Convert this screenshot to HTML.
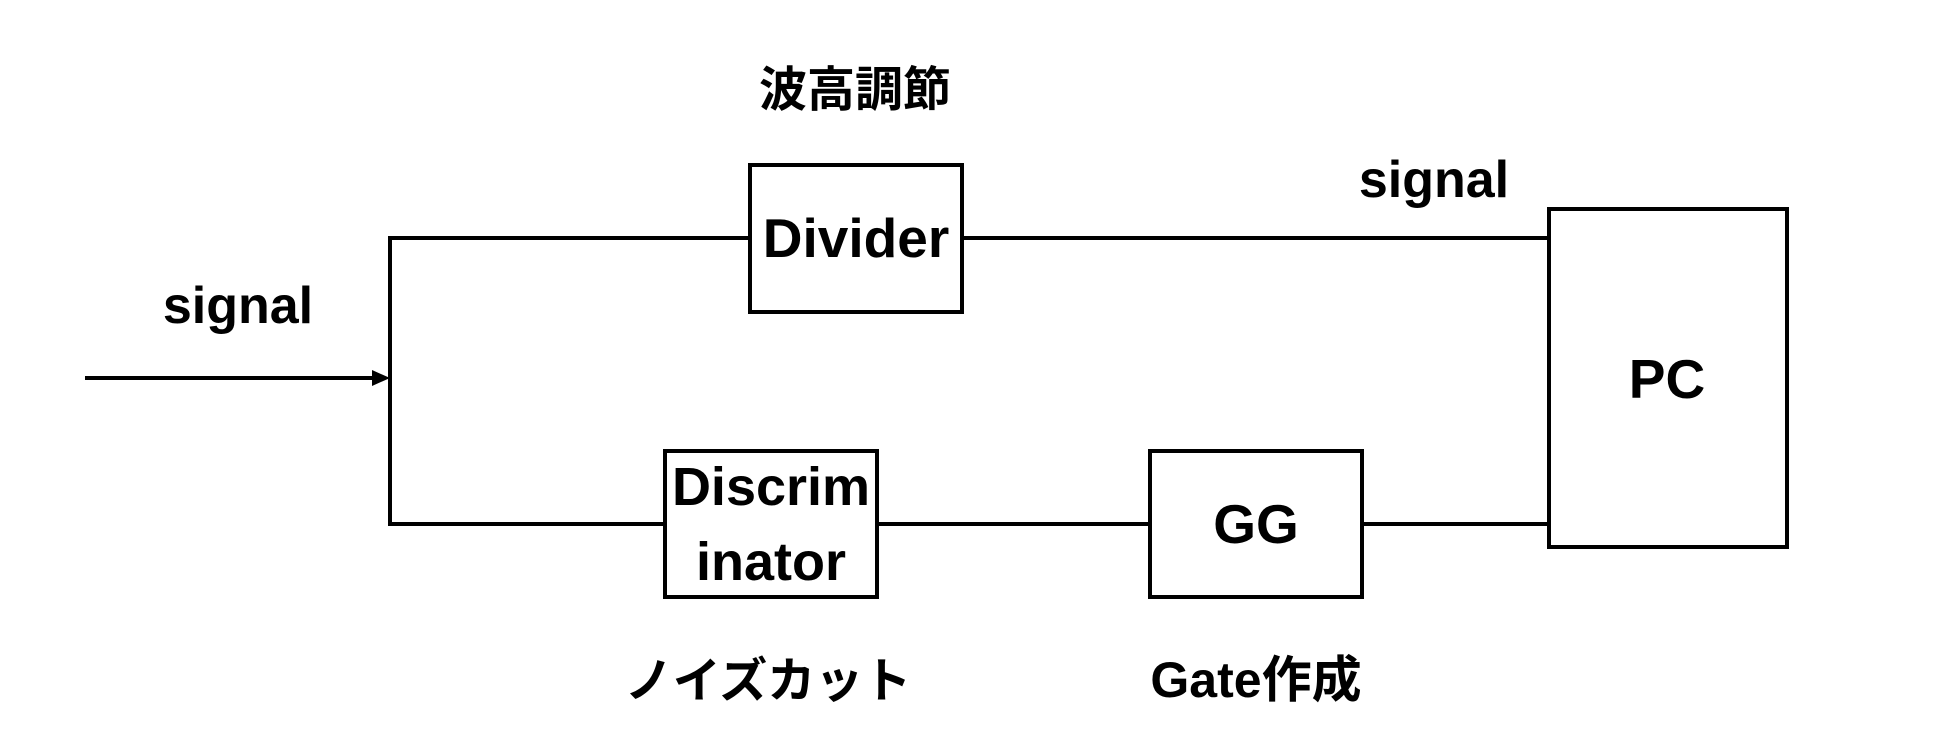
<!DOCTYPE html>
<html><head><meta charset="utf-8"><style>
html,body{margin:0;padding:0;background:#fff;}
svg{display:block;}
text{font-family:"Liberation Sans","Noto Sans CJK JP",sans-serif;font-weight:bold;fill:#000;}
</style></head><body>
<svg width="1935" height="731" viewBox="0 0 1935 731" xmlns="http://www.w3.org/2000/svg">
<g stroke="#000" stroke-width="4" fill="none">
<line x1="85" y1="378" x2="376" y2="378"/>
<line x1="390" y1="236" x2="390" y2="526"/>
<line x1="388" y1="238" x2="750" y2="238"/>
<line x1="962" y1="238" x2="1549" y2="238"/>
<line x1="388" y1="524" x2="664" y2="524"/>
<line x1="878" y1="524" x2="1150" y2="524"/>
<line x1="1362" y1="524" x2="1549" y2="524"/>
<rect x="750" y="165" width="212" height="147"/>
<rect x="665" y="451" width="212" height="146"/>
<rect x="1150" y="451" width="212" height="146"/>
<rect x="1549" y="209" width="238" height="338"/>
</g>
<polygon points="372,370 390,378 372,386" fill="#000"/>
<text x="855" y="106" font-size="48" text-anchor="middle">波高調節</text>
<text x="1434" y="197" font-size="52" text-anchor="middle">signal</text>
<text x="238" y="323" font-size="52" text-anchor="middle">signal</text>
<text x="856" y="257" font-size="55" text-anchor="middle">Divider</text>
<text x="1667" y="398" font-size="55" text-anchor="middle">PC</text>
<text x="771" y="505" font-size="54" text-anchor="middle">Discrim</text>
<text x="771" y="580" font-size="54" text-anchor="middle">inator</text>
<text x="1256" y="543" font-size="55" text-anchor="middle">GG</text>
<text x="768" y="697" font-size="48" text-anchor="middle">ノイズカット</text>
<text x="1256" y="697" font-size="50" text-anchor="middle">Gate作成</text>
</g>
</svg>
</body></html>
